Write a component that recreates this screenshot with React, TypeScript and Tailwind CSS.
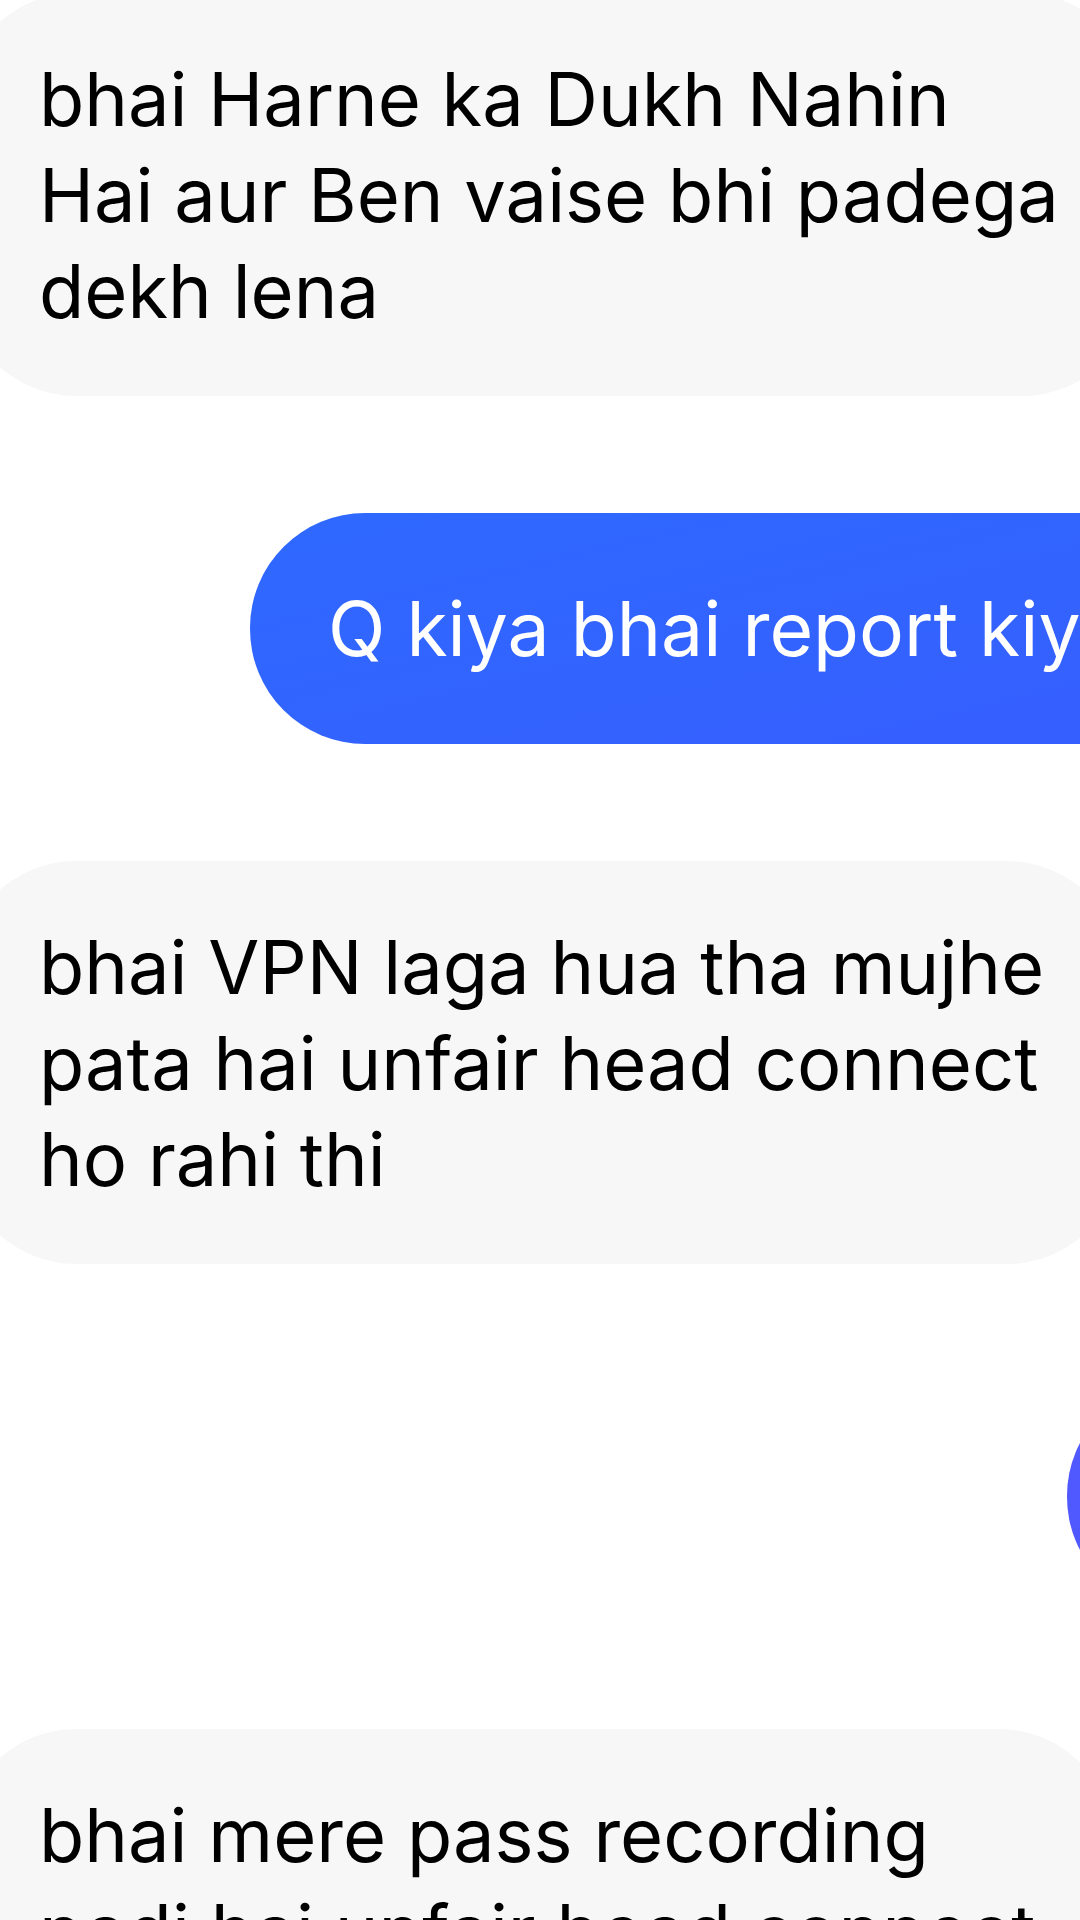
import clsx from 'clsx';

type Message = {
  id: number;
  sender: 'me' | 'them';
  text: string;
  className?: string;
};

const messages: Message[] = [
  {
    id: 1,
    sender: 'them',
    text: 'bhai Harne ka Dukh Nahin\nHai aur Ben vaise bhi padega\ndekh lena'
  },
  {
    id: 2,
    sender: 'me',
    text: 'Q kiya bhai report kiy',
    className: 'ml-[250px] pr-[160px] bg-linear-to-br from-[#2e69ff] to-[#365eff]'
  },
  {
    id: 3,
    sender: 'them',
    text: 'bhai VPN laga hua tha mujhe\npata hai unfair head connect\nho rahi thi'
  },
  {
    id: 4,
    sender: 'me',
    text: '',
    className: 'ml-[1067px] w-[231px] bg-[#5058ff]'
  },
  {
    id: 5,
    sender: 'them',
    text: 'bhai mere pass recording\npadi hai unfair head connect'
  }
];

const Bubble = ({ sender, text, className }: Omit<Message, 'id'>) => (
  <li
    className={clsx(
      'flex shrink-0 items-center rounded-[115px] px-[78px] leading-[96px]',
      sender === 'them' && '-ml-[39px] bg-[#f7f7f7] pt-[58px] pb-[57px] text-[74px] text-black',
      sender === 'me' && 'h-[231px] text-[75px] text-white',
      className
    )}
  >
    {text && <p className="w-max whitespace-pre">{text}</p>}
  </li>
);

export default function App() {
  return (
    <main className="h-screen overflow-hidden bg-white font-['Inter','Liberation_Sans',sans-serif]">
      <ul className="-mt-[7px] flex flex-col items-start gap-[117px]">
        {messages.map(({ id, ...message }) => (
          <Bubble key={id} {...message} />
        ))}
      </ul>
    </main>
  );
}
